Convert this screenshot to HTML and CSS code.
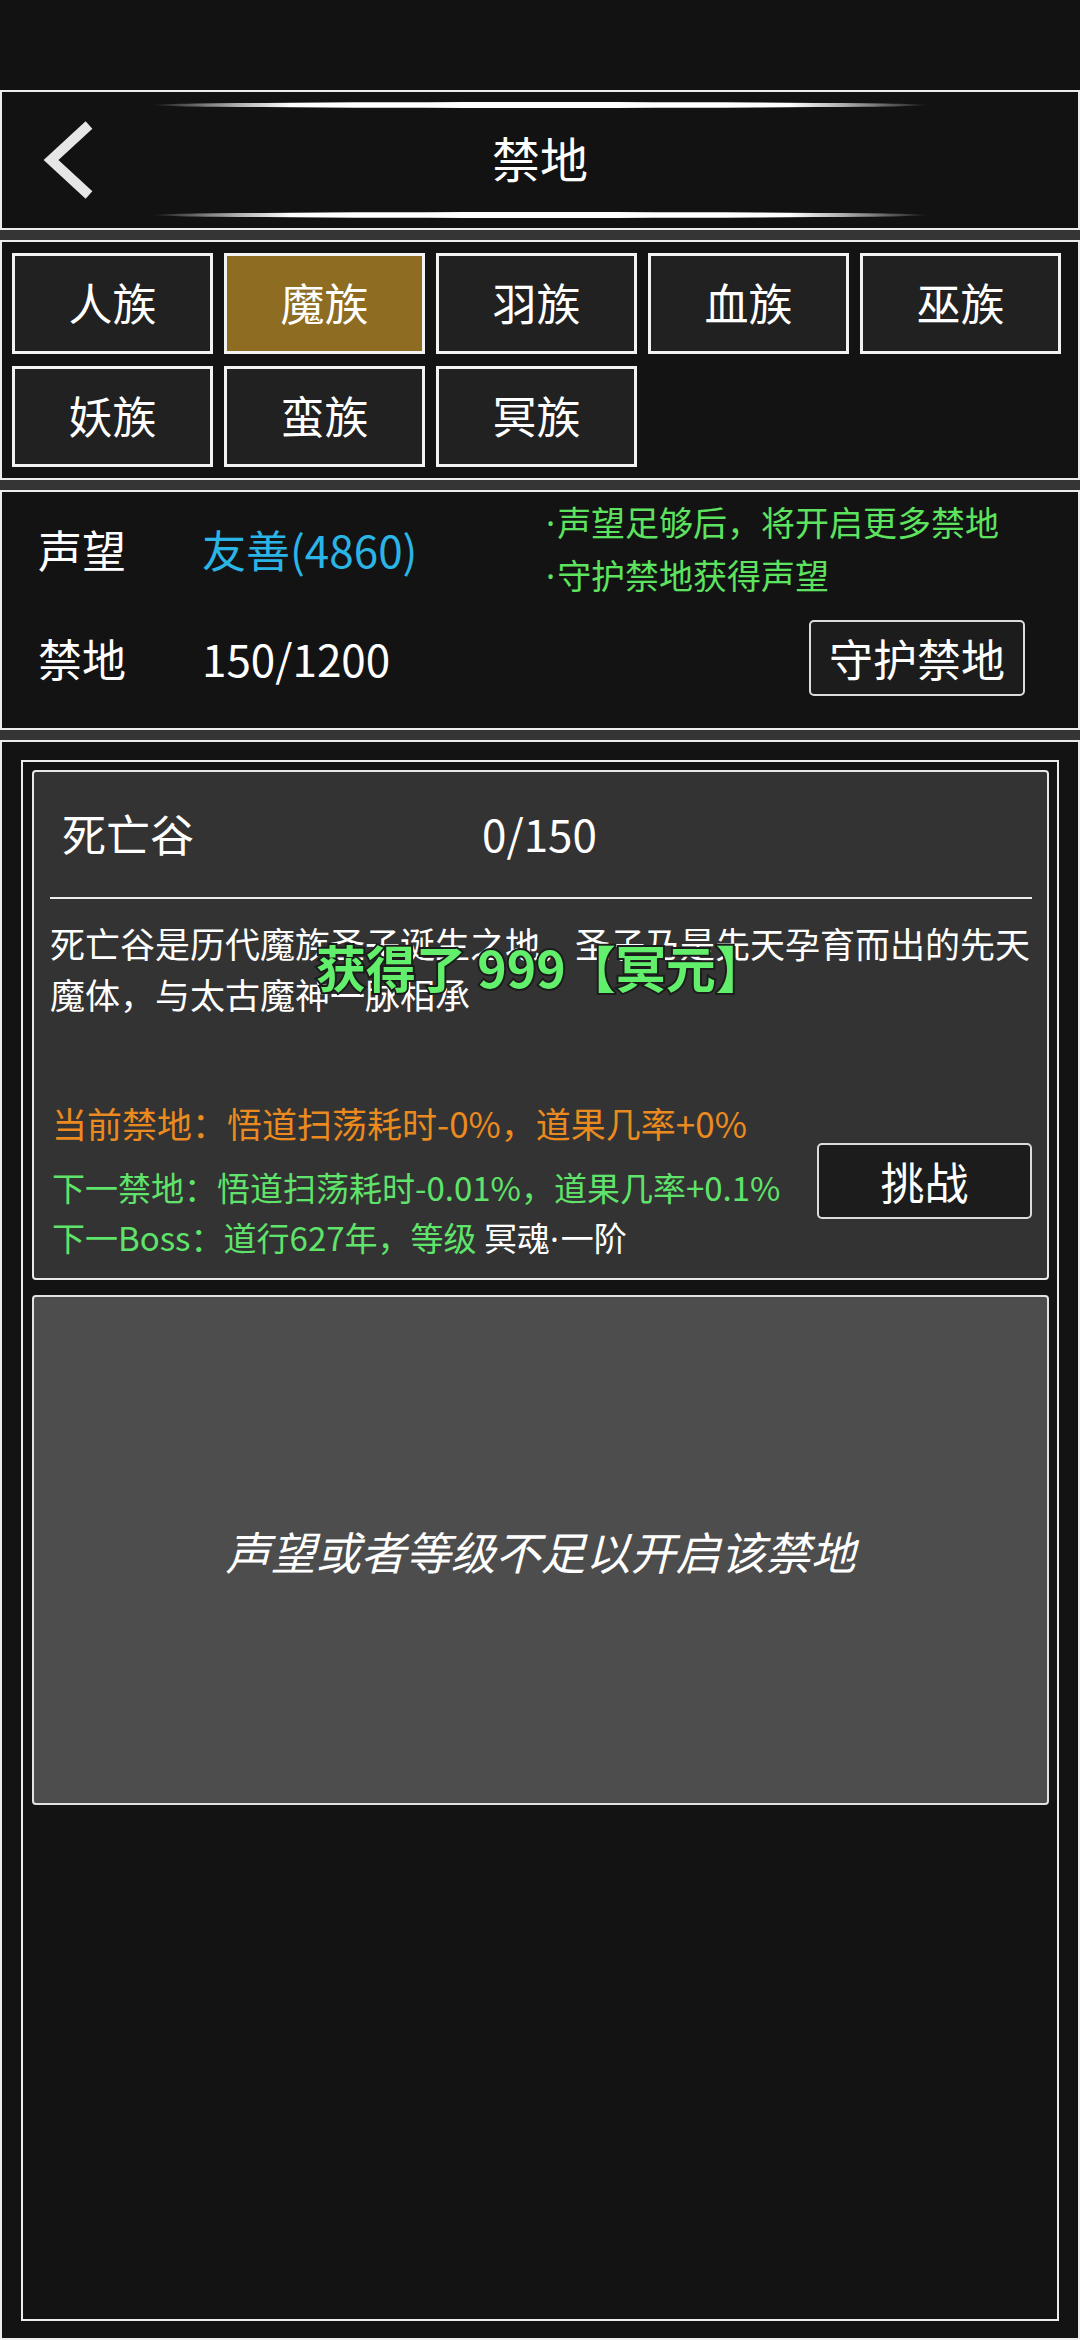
FILE: index.html
```html
<!DOCTYPE html>
<html lang="zh-CN">
<head>
    <meta charset="UTF-8">
    <meta name="viewport" content="width=device-width, initial-scale=1.0">
    <title>禁地</title>
    <link rel="stylesheet" href="styles.css">
</head>
<body>
    <div class="status"></div>
    <div class="page">
        <div class="box header">
            <div class="glow"></div>
            <div class="title-row">
                <div class="back">
                    <svg width="60" height="80" viewBox="0 0 60 80">
                        <polyline points="51,5 13,40 51,75" fill="none" stroke="#e6e6e6" stroke-width="10" stroke-linejoin="miter"/>
                    </svg>
                </div>
                <h1>禁地</h1>
                <div></div>
            </div>
            <div class="glow"></div>
        </div>

        <div class="box tribes">
            <div class="tribe">人族</div>
            <div class="tribe active">魔族</div>
            <div class="tribe">羽族</div>
            <div class="tribe">血族</div>
            <div class="tribe">巫族</div>
            <div class="tribe">妖族</div>
            <div class="tribe">蛮族</div>
            <div class="tribe">冥族</div>
        </div>

        <div class="box info">
            <div class="info-row first">
                <span class="label">声望</span>
                <span class="value fame">友善(4860)</span>
                <div class="notes">
                    <div><span class="dot">·</span>声望足够后，将开启更多禁地</div>
                    <div><span class="dot">·</span>守护禁地获得声望</div>
                </div>
            </div>
            <div class="info-row second">
                <span class="label">禁地</span>
                <span class="value">150/1200</span>
                <div class="btn guard">守护禁地</div>
            </div>
        </div>

        <div class="box main">
            <div class="frame">
                <div class="card">
                    <div class="card-head">
                        <span class="card-name">死亡谷</span>
                        <span>0/150</span>
                    </div>
                    <div class="desc">死亡谷是历代魔族圣子诞生之地，圣子乃是先天孕育而出的先天魔体，与太古魔神一脉相承</div>
                    <div class="card-foot">
                        <div class="lines">
                            <div class="orange">当前禁地<span class="colon">：</span>悟道扫荡耗时-0%，道果几率+0%</div>
                            <div class="green next">下一禁地<span class="colon">：</span>悟道扫荡耗时-0.01%，道果几率+0.1%</div>
                            <div class="green">下一Boss<span class="colon">：</span>道行627年，等级 <span class="white">冥魂<span class="dot">·</span>一阶</span></div>
                        </div>
                        <div class="btn challenge">挑战</div>
                    </div>
                </div>
                <div class="card locked">
                    <span>声望或者等级不足以开启该禁地</span>
                </div>
            </div>
        </div>
    </div>

    <div class="toast">获得了 999【冥元】</div>
</body>
</html>
```

FILE: styles.css
```css
* {
    box-sizing: border-box;
}
body {
    margin: 0;
    width: 1080px;
    height: 2340px;
    overflow: hidden;
    position: relative;
    background: #121212;
    color: #fff;
    font-family: "Noto Sans CJK SC", "Noto Sans", sans-serif;
}
.status {
    height: 90px;
}
.page {
    background: #353535;
}
.box {
    border: 2px solid #ededed;
    background: #131313;
}
.box + .box {
    margin-top: 10px;
}

/* header */
.header {
    height: 140px;
    padding: 10px 0;
    background: #121212;
    display: flex;
    flex-direction: column;
    align-items: center;
}
.glow {
    width: 780px;
    height: 6px;
    border-radius: 50%;
    background: linear-gradient(90deg, rgba(255,255,255,0) 0%, rgba(255,255,255,0.5) 8%, #fff 18%, #fff 82%, rgba(255,255,255,0.5) 92%, rgba(255,255,255,0) 100%);
    filter: blur(0.6px);
}
.title-row {
    flex: 1;
    width: 100%;
    display: grid;
    grid-template-columns: 1fr auto 1fr;
    align-items: center;
}
.back {
    padding-left: 36px;
    display: flex;
}
h1 {
    margin: 0 0 6px;
    font-size: 48px;
    font-weight: normal;
    line-height: 1;
}

/* tribes */
.tribes {
    height: 240px;
    padding: 11px 10px;
    display: grid;
    grid-template-columns: repeat(5, 201px);
    grid-auto-rows: 101px;
    column-gap: 11px;
    row-gap: 12px;
}
.tribe {
    border: 3px solid #f2f2f2;
    background: #212121;
    font-size: 44px;
    display: flex;
    align-items: center;
    justify-content: center;
    padding-bottom: 3px;
}
.tribe.active {
    background: #8e6c21;
}

/* info */
.info {
    height: 240px;
    padding: 0 0 18px 36px;
}
.info-row {
    display: flex;
    align-items: center;
}
.info-row.first {
    height: 114px;
}
.info-row.second {
    height: 104px;
}
.label {
    width: 164px;
    font-size: 44px;
}
.value {
    font-size: 44px;
}
.fame {
    color: #2bb4e6;
    width: 344px;
}
.notes {
    color: #5de35f;
    font-size: 34px;
    line-height: 51px;
}
.dot {
    font-family: "Noto Sans", sans-serif;
    margin-right: 2px;
}
.btn {
    border: 2px solid #dcdcdc;
    border-radius: 5px;
    background: #1c1c1c;
    font-size: 44px;
    display: flex;
    align-items: center;
    justify-content: center;
}
.guard {
    width: 216px;
    height: 76px;
    margin-left: auto;
    margin-right: 53px;
}

/* main */
.main {
    height: 1600px;
    padding: 18px 19px 0;
}
.frame {
    height: 1561px;
    border: 2px solid #ededed;
    padding: 8px 8px 0 9px;
}
.card {
    height: 510px;
    border: 2px solid #e8e8e8;
    border-radius: 4px;
    background: #333;
    display: flex;
    flex-direction: column;
}
.card-head {
    height: 127px;
    margin: 0 15px 0 16px;
    padding-left: 12px;
    padding-bottom: 4px;
    border-bottom: 2px solid #eee;
    display: flex;
    align-items: center;
    font-size: 44px;
}
.card-name {
    width: 420px;
}
.desc {
    margin: 18px 8px 0 16px;
    font-size: 35px;
    line-height: 51px;
}
.card-foot {
    margin: auto 15px 14px 18px;
    display: flex;
    align-items: center;
    justify-content: space-between;
}
.lines {
    line-height: 50px;
}
.orange {
    color: #ea8a1f;
    font-size: 35px;
}
.green {
    color: #5fe36b;
    font-size: 33px;
}
.green.next {
    margin-top: 14px;
}
.colon {
    font-family: "Noto Sans CJK JP", sans-serif;
}
.white {
    color: #fff;
}
.challenge {
    width: 215px;
    height: 76px;
}
.card.locked {
    margin-top: 15px;
    background: #4d4d4d;
    border-color: #e2e2e2;
    align-items: center;
    justify-content: center;
}
.locked span {
    font-size: 45px;
    font-style: italic;
}

/* reward toast over the card */
.toast {
    position: absolute;
    left: 316px;
    top: 938px;
    font-size: 50px;
    line-height: 56px;
    font-weight: bold;
    color: #62f06c;
    -webkit-text-stroke: 4px #1c1c1c;
    paint-order: stroke fill;
    white-space: nowrap;
}
```
